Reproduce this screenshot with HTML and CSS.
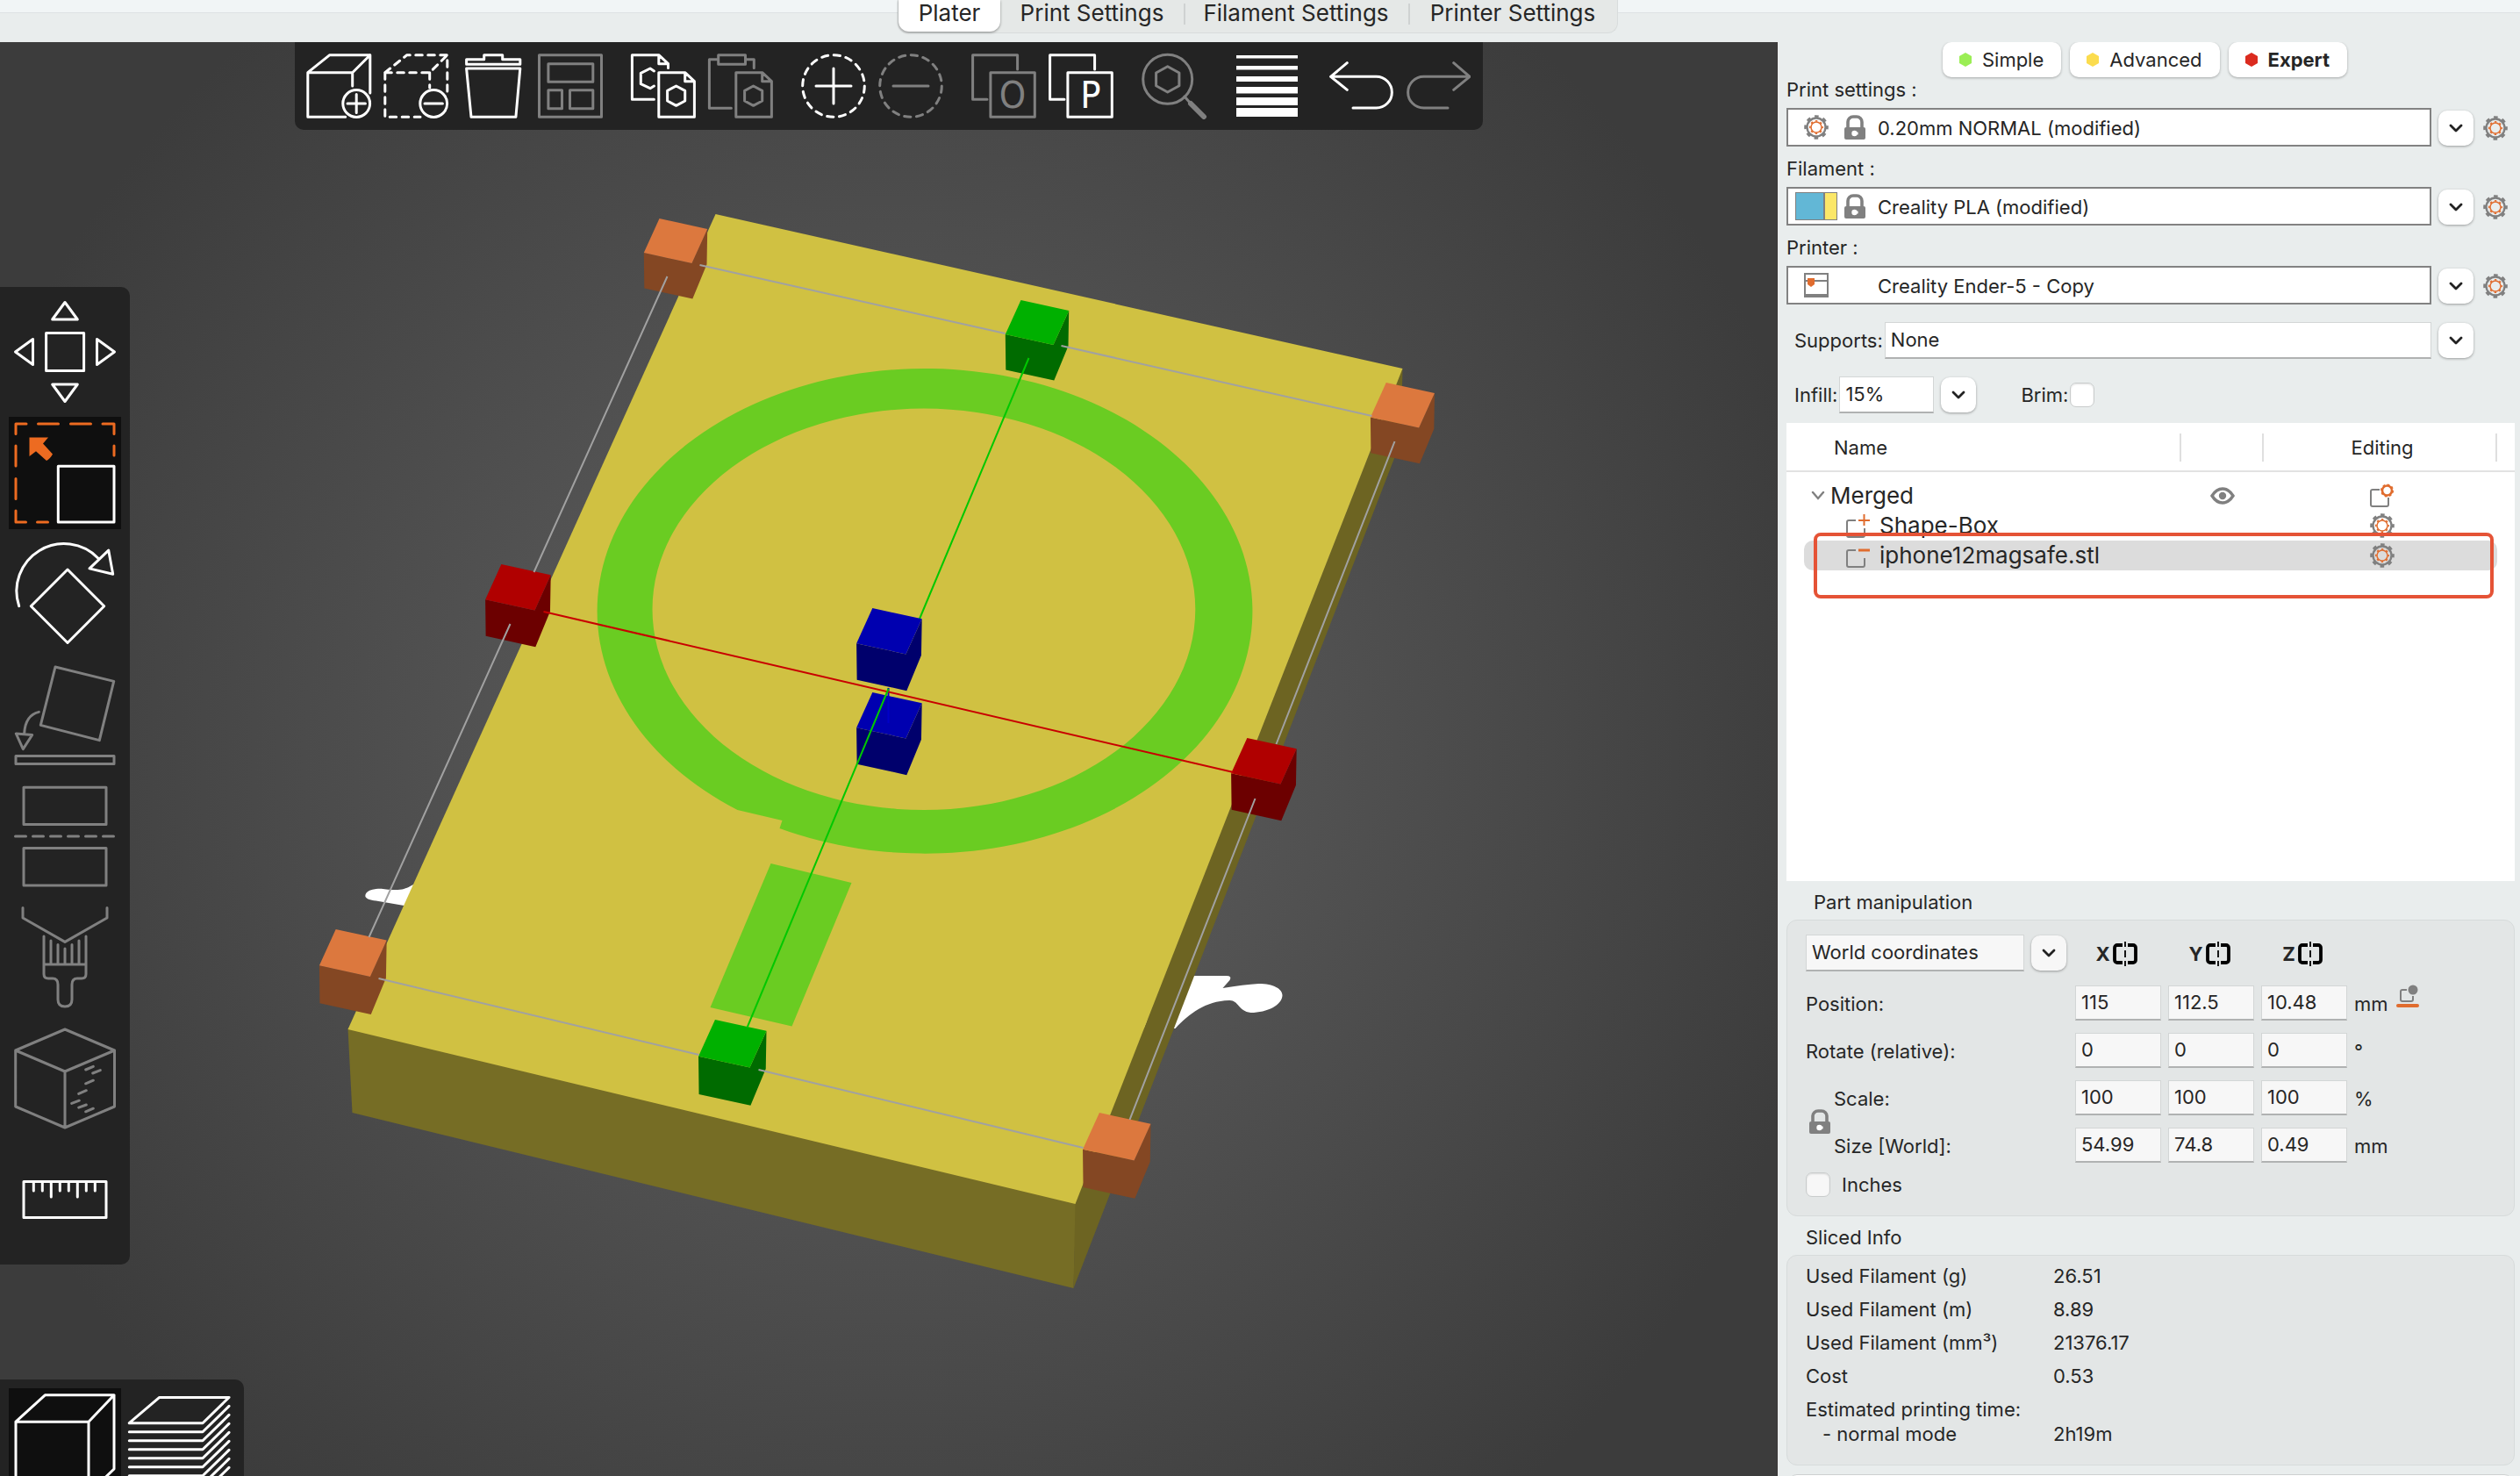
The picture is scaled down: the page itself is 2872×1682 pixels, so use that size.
FILE: index.html
```html
<!DOCTYPE html>
<html lang="en">
<head>
<meta charset="utf-8">
<title>Plater</title>
<link rel="stylesheet" href="styles.css">
</head>
<body>
<svg class="defs" width="0" height="0" aria-hidden="true">
  <symbol id="gear" viewBox="0 0 28 28">
    <g fill="none" stroke="#808080"><circle cx="14" cy="14" r="10.5" stroke-width="2.4"/><circle cx="14" cy="14" r="12.4" stroke-width="2.8" stroke-dasharray="4.6 5.14" stroke-dashoffset="2.3"/></g>
    <g fill="none" stroke="#e06c2e"><circle cx="14" cy="14" r="6" stroke-width="1.5"/><circle cx="14" cy="14" r="7.2" stroke-width="1.6" stroke-dasharray="2.4 3.25" stroke-dashoffset="1.2"/></g>
  </symbol>
  <symbol id="lock" viewBox="0 0 24 28">
    <path d="M4 15V8a6 6 0 0 1 6-6h4a6 6 0 0 1 6 6v7" fill="none" stroke="#808080" stroke-width="3.6"/>
    <rect y="14" width="24" height="14" rx="2" fill="#808080"/>
    <circle cx="11.5" cy="21" r="3.2" fill="#fff"/><path d="M12 19.6h3.6v2.8H12z" fill="#fff"/>
  </symbol>
  <symbol id="down" viewBox="0 0 16 10"><path d="M2 2l6 6 6-6" fill="none" stroke="#222" stroke-width="2.8" stroke-linecap="round" stroke-linejoin="round"/></symbol>
  <symbol id="mirror" viewBox="0 0 28 28">
    <path d="M11 4H5a3 3 0 0 0-3 3v14a3 3 0 0 0 3 3h6M17 4h6a3 3 0 0 1 3 3v14a3 3 0 0 1-3 3h-6" fill="none" stroke="#000" stroke-width="3.8"/>
    <path d="M14 0v6M14 10v8M14 22v6" stroke="#000" stroke-width="1.8"/>
  </symbol>
  <symbol id="handle" viewBox="0 0 80 100" overflow="visible">
    <path d="M.3 39L55 51L72.700 11.900L72 52.300L55.800 91.400L.8 79.400z" class="shade"/>
    <path d="M18 0l54.7 11.9L55 51 .3 39z"/>
  </symbol>
</svg>

<header class="titlebar">
  <nav class="tabs">
    <button class="tab active">Plater</button>
    <button class="tab print">Print Settings</button>
    <button class="tab filament">Filament Settings</button>
    <button class="tab printer">Printer Settings</button>
  </nav>
</header>

<main class="plater">
  <section class="canvas">
    <svg class="scene" viewBox="0 48 2026 1634" preserveAspectRatio="xMidYMid slice">
      <path fill="#fff" d="M490 1000C466 1008 468 1014 451 1014C440 1014 437 1012 429 1013C420 1014 416 1018 417 1022C419 1025 424 1026 432 1027L461 1032L490 1032Z"/>
      <path fill="#fff" d="M1350 1112H1398Q1405 1112 1402 1117L1394 1126Q1418 1122 1435 1121C1452 1121 1462 1127 1462 1134C1462 1145 1445 1154 1426 1154C1411 1152 1412 1139 1401 1140C1374 1141 1356 1155 1340 1172L1300 1172Z"/>
      <path fill="#766d25" d="M397 1172L1227 1371L1224 1468L402 1268z"/>
      <path fill="#6d6422" d="M1599 420L1597 503L1224 1468L1226 1371z"/>
      <path fill="#d0c142" d="M816 244L1599 420L1226 1372L397 1173z"/>
      <path fill="#6acc22" fill-rule="evenodd" d="M889 944A373.4 276.3 0 1 0 841 923L892 935ZM744 694.3a309.4 228.7 0 1 1 618.8 0a309.4 228.7 0 1 1-618.8 0Z"/>
      <path fill="#6acc22" d="M879 984l92 22l-68 163.500l-93-21.500z"/>
      <g class="orange"><use href="#handle" x="734" y="249" width="80" height="100"/><use href="#handle" x="1562" y="436" width="81" height="101"/></g>
      <g class="green"><use href="#handle" x="1146" y="342" width="80" height="100"/></g>
      <g class="red"><use href="#handle" x="553" y="643" width="83" height="103"/><use href="#handle" x="1403" y="841" width="83" height="103"/></g>
      <path stroke="#00c800" stroke-width="2" d="M1173 408L1036 735"/>
      <g class="blue"><use href="#handle" x="976" y="693" width="83" height="103"/><use href="#handle" x="976" y="789" width="83" height="103"/></g>
      <g class="green"><use href="#handle" x="796" y="1162" width="86" height="107"/></g>
      <g class="orange"><use href="#handle" x="364" y="1059" width="85" height="106"/><use href="#handle" x="1234" y="1268" width="86" height="107"/></g>
      <path stroke="#a1a1a1" stroke-width="2" fill="none" d="M798 302L1146 380M1210 394L1564 474M761 315L609 652M582 711L421 1068M432 1115L797 1202M865 1219L1235 1308M1288 1276L1431 910M1455 848L1590 503"/>
      <path stroke="#0000c8" stroke-width="2" d="M1013 784v40"/>
      <path stroke="#c80000" stroke-width="2" d="M620 697L1406 880"/>
      <path stroke="#00c800" stroke-width="2" d="M1013 785L852 1171"/>
    </svg>

    <div class="toolbar top">
      <button aria-label="Add"><svg viewBox="0 0 76 76"><path d="M45.700 73.300H2.800V22.700L27.800 2.700H73.800V46M2.800 22.700H53.700L73.800 2.700M53.700 22.700V38"/><circle cx="58.200" cy="58" r="15.400"/><path d="M48 58h20.400M58.200 47.500v21"/></svg></button>
      <button aria-label="Delete"><svg viewBox="0 0 76 76"><path stroke-dasharray="7.500 6.500" d="M2.800 22.700V73.300H43M2.800 22.700L27.800 2.700H73.800V44M2.800 22.700H53.700L73.800 2.700M53.700 22.700V40"/><circle cx="58.200" cy="58" r="15.400"/><path d="M48 58h20.400"/></svg></button>
      <button aria-label="Delete all"><svg viewBox="0 0 76 76"><path d="M7.600 13.300V7.700H27.700V2.700H48.700V7.700H68.800V13.300ZM7.600 18H68.800L63.900 73.300H13Z"/></svg></button>
      <button aria-label="Arrange" class="off"><svg viewBox="0 0 76 76"><path d="M2.500 2.700H73.500V73.300H2.500ZM12.900 12.700H63.800V33.300H12.900ZM12.900 42.700H28.500V63.700H12.900ZM37.500 42.700H63.800V63.700H37.500Z"/></svg></button>
      <button aria-label="Copy" class="group"><svg viewBox="0 0 76 76"><path d="M27.400 53.300H2.400V2.700H32.800L43.500 12.700V17.500M32.800 2.700V12.700H43.500M27.400 21L23 18L12.300 23.300V35.700L23 40.700L27.400 38M32.800 22.700H62.700L73.400 32.700V73.300H32.800ZM62.700 22.700V32.700H73.400M52.600 38L62.700 43.300V55L52.600 60.300L42.600 55V43.300Z"/></svg></button>
      <button aria-label="Paste" class="off"><svg viewBox="0 0 76 76"><path d="M12.700 7.700H2.400V63.300H27.400M43.500 7.700H53.300V17.500M12.700 2.700H43.500V13.300H12.700ZM32.800 22.700H62.700L73.400 32.700V73.300H32.800ZM62.700 22.700V32.700H73.400M52.600 38L62.700 43.300V55L52.600 60.300L42.600 55V43.300Z"/></svg></button>
      <button aria-label="Add instance" class="group"><svg viewBox="0 0 76 76"><circle cx="38" cy="38" r="35.300" stroke-dasharray="7.300 6.560"/><path d="M18 38h40M38 18v40"/></svg></button>
      <button aria-label="Remove instance" class="off"><svg viewBox="0 0 76 76"><circle cx="38" cy="38" r="35.300" stroke-dasharray="7.300 6.560"/><path d="M18 38h40"/></svg></button>
      <button aria-label="Split to objects" class="off group"><svg viewBox="0 0 76 76"><path d="M19 53.300H2.600V2.700H53.600V19M22.900 22.700H73.300V73.300H22.900Z"/><text x="48" y="63" text-anchor="middle">O</text></svg></button>
      <button aria-label="Split to parts"><svg viewBox="0 0 76 76"><path d="M19 53.300H2.600V2.700H53.600V19M22.900 22.700H73.300V73.300H22.900Z"/><text x="49" y="63" text-anchor="middle">P</text></svg></button>
      <button aria-label="Search" class="off group"><svg viewBox="0 0 76 76"><circle cx="30.700" cy="30.300" r="28"/><path d="M30.700 15.700L43.900 23V37.700L30.700 45L17.600 37.700V23ZM50 50l7 8"/><path d="M57 58L72 73" stroke-width="6"/></svg></button>
      <button aria-label="Variable layer height" class="group"><svg viewBox="0 0 76 76"><path class="solid" d="M3 3h70v3.500H3zM3 15h70v4.500H3zM3 27h70v6H3zM3 39h70v7.500H3zM3 51h70v9H3zM3 63h70v10H3z"/></svg></button>
      <button aria-label="Undo" class="group"><svg viewBox="0 0 76 76"><path d="M23.300 11.700L4.600 27.300L23.300 42.300M4.600 27.300H56.500A17.800 17.800 0 0 1 56.500 63H30"/></svg></button>
      <button aria-label="Redo" class="off"><svg viewBox="0 0 76 76"><path d="M56.700 11.700L75 27.300L56.700 42.300M75 27.300H22.500A17.800 17.800 0 0 0 22.500 63H50"/></svg></button>
    </div>

    <div class="toolbar left">
      <button aria-label="Move"><svg viewBox="0 0 128 128"><path d="M64 7.500L78.300 27H49.700ZM64 120.500L78.300 101H49.700ZM7.500 64L27.500 49.500V78.500ZM120.500 64L100.500 49.500V78.500ZM42.600 42.600H85.600V85.600H42.600Z"/></svg></button>
      <button aria-label="Scale" class="selected"><svg viewBox="0 0 128 128"><path stroke="#ed6b21" d="M8 19.500V8H20M33.500 8H56.500M70.500 8H93.500M107 8H120V19.500M120 33V44M8 33V56M8 70.500V93.500M8 107V120H19.500M32.500 120H44.500"/><path d="M56.300 56.300H120V120H56.300Z"/><path fill="#ed6b21" stroke="none" d="M23.500 23.500H45L39 30.500L50 42.500Q47 48 43 50L31 39.300L23.500 45Z"/></svg></button>
      <button aria-label="Rotate"><svg viewBox="0 0 128 128"><path d="M11.700 77.700A54 54 0 0 1 101.700 23M113.700 14.100L118.700 41.300L92 34.900ZM67 36L108.700 77.700L67 119.500L25.300 77.700Z"/></svg></button>
      <button aria-label="Place on face" class="off"><svg viewBox="0 0 128 128"><path d="M53 9L119.700 25.400L103.300 92.600L36.300 75.400ZM34.300 60.400Q19 64 17.700 84.400M8.300 85L26.700 86.500L16.300 102.600ZM8 110.500H120V119.500H8Z"/></svg></button>
      <button aria-label="Cut" class="off"><svg viewBox="0 0 128 128"><path d="M17 8.200H111V50.500H17ZM17 77.500H111V120H17Z"/><path stroke-dasharray="12 8" d="M7.500 64H120"/></svg></button>
      <button aria-label="Paint supports" class="off"><svg viewBox="0 0 128 128"><path d="M16 7.600V19L64 46.400L112 19V7.600M40 40V83Q40 88 45 88H50Q56 88 56 95V112Q56 120 64 120T72 112V95Q72 88 78 88H83Q88 88 88 83V40M40 72H88M48 45V72M56 49.500V72M64 54V72M72 49.500V72M80 45V72"/></svg></button>
      <button aria-label="Seam painting" class="off"><svg viewBox="0 0 128 128"><path d="M64 8L120.500 32L64 56L7.700 32ZM7.700 32V96L64 120L120.500 96V32M64 56V120M87.700 54L96.300 50.400M95.700 58L104.300 54.600M87.700 69.800L96.300 66.200M79.700 81.400L88.300 77.700M71.700 92.400L80.300 89.200M79.700 97.100L88.300 94M87.700 101.800L96.300 98.200"/></svg></button>
      <button aria-label="Measure"><svg viewBox="0 0 128 128"><path d="M17 43.500H111V84.500H17ZM28.300 43.500V54M38.300 43.500V54M48.300 43.500V61M58.300 43.500V54M68.300 43.500V54M78.300 43.500V61M88.300 43.500V54M98.300 43.500V54"/></svg></button>
    </div>

    <div class="toolbar views">
      <button aria-label="3D editor view" class="selected"><svg viewBox="0 0 128 128"><path d="M8 38.200H91L120 7.800H41.300ZM8 38.200V120H91V38.200M120 7.800V92L91 120"/></svg></button>
      <button aria-label="Preview"><svg viewBox="0 0 128 128"><path d="M7.300 39.700H91L121 10.400H41.700ZM7.300 49.700H91L121 20.400M7.300 59.700H91L121 30.400M7.300 69.700H91L121 40.400M7.300 79.700H91L121 50.400M7.300 89.700H91L121 60.400M7.300 99.700H91L121 70.400M7.300 109.700H91L121 80.400M7.300 119.700H91L121 90.400"/></svg></button>
    </div>
  </section>

  <aside class="sidebar">
    <div class="modes">
      <button class="mode"><svg viewBox="0 0 16 16"><path fill="#9bee55" d="M8 0l7 4v8l-7 4-7-4V4z"/></svg>Simple</button>
      <button class="mode"><svg viewBox="0 0 16 16"><path fill="#fbdc4e" d="M8 0l7 4v8l-7 4-7-4V4z"/></svg>Advanced</button>
      <button class="mode current"><svg viewBox="0 0 16 16"><path fill="#db2b1f" d="M8 0l7 4v8l-7 4-7-4V4z"/></svg>Expert</button>
    </div>

    <div class="preset">
      <label for="print">Print settings :</label>
      <div class="row">
        <div class="field"><svg class="kind"><use href="#gear"/></svg><svg class="lock"><use href="#lock"/></svg><select id="print"><option>0.20mm NORMAL (modified)</option></select></div>
        <button class="arrow" aria-label="Open list"><svg><use href="#down"/></svg></button>
        <button class="edit" aria-label="Edit preset"><svg><use href="#gear"/></svg></button>
      </div>
    </div>
    <div class="preset">
      <label for="filament">Filament :</label>
      <div class="row">
        <div class="field"><span class="swatch"></span><svg class="lock"><use href="#lock"/></svg><select id="filament"><option>Creality PLA (modified)</option></select></div>
        <button class="arrow" aria-label="Open list"><svg><use href="#down"/></svg></button>
        <button class="edit" aria-label="Edit preset"><svg><use href="#gear"/></svg></button>
      </div>
    </div>
    <div class="preset">
      <label for="printer">Printer :</label>
      <div class="row">
        <div class="field"><svg class="kind" viewBox="0 0 28 28"><path fill="none" stroke="#808080" stroke-width="2" d="M1 1h26v26H1zM1 9h26"/><path fill="#808080" d="M0 24h28v4H0z"/><path fill="#e06c2e" d="M4 6h8v7l-4 3-4-3z"/></svg><span class="lock"></span><select id="printer"><option>Creality Ender-5 - Copy</option></select></div>
        <button class="arrow" aria-label="Open list"><svg><use href="#down"/></svg></button>
        <button class="edit" aria-label="Edit preset"><svg><use href="#gear"/></svg></button>
      </div>
    </div>

    <div class="quick">
      <label for="supports">Supports:</label>
      <select id="supports" class="box grow"><option>None</option></select>
      <button class="arrow" aria-label="Open list"><svg><use href="#down"/></svg></button>
    </div>
    <div class="quick second">
      <label for="infill">Infill:</label>
      <select id="infill" class="box infill"><option>15%</option></select>
      <button class="arrow" aria-label="Open list"><svg><use href="#down"/></svg></button>
      <label for="brim" class="brim">Brim:</label><input type="checkbox" id="brim" class="check">
    </div>

    <div class="tree">
      <table>
        <colgroup><col><col class="c-eye"><col class="c-edit"></colgroup>
        <thead><tr><th class="name"><span>Name</span></th><th><span>&nbsp;</span></th><th class="editing"><span>Editing</span></th></tr></thead>
        <tbody>
          <tr><td><div class="item"><svg class="chev" viewBox="0 0 16 10"><path d="M2 1l6 7 6-7" fill="none" stroke="#808080" stroke-width="2.400" stroke-linecap="round"/></svg>Merged</div></td>
            <td><svg class="eye" viewBox="0 0 28 20"><path fill="none" stroke="#808080" stroke-width="3.400" d="M2 10Q7 2 14 2T26 10Q21 18 14 18T2 10Z"/><circle cx="14" cy="10" r="4.200" fill="#808080"/></svg></td>
            <td><svg class="ico" viewBox="0 0 28 28"><path fill="none" stroke="#808080" stroke-width="2" d="M11 7H3a2 2 0 0 0-2 2v15a2 2 0 0 0 2 2h16a2 2 0 0 0 2-2v-8"/><circle cx="19.500" cy="8" r="5.500" fill="none" stroke="#e06c2e" stroke-width="2.600"/><circle cx="19.500" cy="8" r="6.800" fill="none" stroke="#e06c2e" stroke-width="1.500" stroke-dasharray="2.700 2.640"/></svg></td></tr>
          <tr><td><div class="item part"><svg class="ico" viewBox="0 0 28 28"><path fill="none" stroke="#808080" stroke-width="2" d="M11 8H3a2 2 0 0 0-2 2v15a2 2 0 0 0 2 2h16a2 2 0 0 0 2-2v-8"/><path stroke="#e06c2e" stroke-width="2" d="M14 8h13M20.500 1v13"/></svg>Shape-Box</div></td><td></td><td><svg class="ico"><use href="#gear"/></svg></td></tr>
          <tr class="picked"><td><div class="item part"><svg class="ico" viewBox="0 0 28 28"><path fill="none" stroke="#808080" stroke-width="2" d="M11 8H3a2 2 0 0 0-2 2v15a2 2 0 0 0 2 2h16a2 2 0 0 0 2-2v-8"/><path stroke="#e06c2e" stroke-width="3" d="M14 8h13"/></svg>iphone12magsafe.stl</div></td><td></td><td><svg class="ico"><use href="#gear"/></svg></td></tr>
        </tbody>
      </table>
      <div class="highlight"></div>
    </div>

    <h2 class="caption inset">Part manipulation</h2>
    <section class="panel">
      <div class="manip">
        <div class="coords"><select class="box grow" aria-label="Coordinates"><option>World coordinates</option></select><button class="arrow" aria-label="Open list"><svg><use href="#down"/></svg></button></div>
        <button class="axis">X<svg><use href="#mirror"/></svg></button><button class="axis">Y<svg><use href="#mirror"/></svg></button><button class="axis">Z<svg><use href="#mirror"/></svg></button><span></span>

        <label class="wide" for="px">Position:</label>
        <input id="px" class="box" value="115"><input class="box" value="112.5" aria-label="Position Y"><input class="box" value="10.48" aria-label="Position Z">
        <span class="unit">mm<svg class="drop" viewBox="0 0 28 28"><path fill="none" stroke="#808080" stroke-width="2" d="M13 6H8a2 2 0 0 0-2 2v9a2 2 0 0 0 2 2h10a2 2 0 0 0 2-2v-4"/><circle cx="20" cy="6" r="5.500" fill="#808080"/><rect x="1" y="22" width="26" height="4" rx="2" fill="#e06c2e"/></svg></span>

        <label class="wide" for="rx">Rotate (relative):</label>
        <input id="rx" class="box" value="0"><input class="box" value="0" aria-label="Rotate Y"><input class="box" value="0" aria-label="Rotate Z"><span class="unit">°</span>

        <svg class="ratio"><use href="#lock"/></svg>
        <label for="sx">Scale:</label>
        <input id="sx" class="box" value="100"><input class="box" value="100" aria-label="Scale Y"><input class="box" value="100" aria-label="Scale Z"><span class="unit">%</span>
        <label for="zx">Size [World]:</label>
        <input id="zx" class="box" value="54.99"><input class="box" value="74.8" aria-label="Size Y"><input class="box" value="0.49" aria-label="Size Z"><span class="unit">mm</span>
      </div>
      <div class="inches"><input type="checkbox" id="inches" class="check"><label for="inches">Inches</label></div>
    </section>

    <h2 class="caption">Sliced Info</h2>
    <section class="panel info">
      <table>
        <tr><th>Used Filament (g)</th><td>26.51</td></tr>
        <tr><th>Used Filament (m)</th><td>8.89</td></tr>
        <tr><th>Used Filament (mm³)</th><td>21376.17</td></tr>
        <tr><th>Cost</th><td>0.53</td></tr>
        <tr class="est"><th>Estimated printing time:</th><td></td></tr>
        <tr class="sub"><th>- normal mode</th><td>2h19m</td></tr>
      </table>
    </section>
    <button class="action" aria-label="Slice"></button>
  </aside>
</main>
</body>
</html>
```
FILE: styles.css
```css
* { box-sizing: border-box; }
body {
  margin: 0;
  height: 100vh;
  display: flex;
  flex-direction: column;
  overflow: hidden;
  background: #e9eded;
  color: #262626;
  font: 22px/28px Inter, "Liberation Sans", sans-serif;
}
button, input, select { font: inherit; color: inherit; margin: 0; }
button { padding: 0; border: 0; background: none; }
svg { display: block; flex: none; }
.defs { position: absolute; }

/* title bar and tabs */
.titlebar {
  flex: none;
  height: 48px;
  padding-right: 5px;
  display: flex;
  justify-content: center;
  align-items: flex-start;
  background: linear-gradient(#f1f5f6 14px, #dde2e3 14px, #dde2e3 15px, #e9eded 15px);
}
.tabs {
  display: flex;
  height: 38px;
  background: #e5e8e7;
  border: 1px solid #d8dcdc;
  border-top: 0;
  border-radius: 0 0 12px 12px;
}
.tab { height: 33px; font-size: 26px; line-height: 30px; padding: 0 0 3px; }
.tab.active { width: 116px; height: 36px; padding-bottom: 6px; background: #fff; border-radius: 0 0 12px 12px; box-shadow: 0 1px 3px rgba(0, 0, 0, .4); }
.tab.print { width: 209px; }
.tab.filament { width: 256px; }
.tab.printer { width: 238px; }
.tab.filament, .tab.printer {
  background: linear-gradient(#cfd2d2, #cfd2d2) 0 4px / 2px 24px no-repeat;
}

.plater { flex: 1; min-height: 0; display: grid; grid-template-columns: minmax(0, 1fr) 846px; }

/* 3D canvas */
.canvas {
  position: relative;
  overflow: hidden;
  background: radial-gradient(circle at 50% 50%, #626262, #3c3c3c 1100px);
  border-right: 1px solid #3c3737;
}
.scene { position: absolute; inset: 0; width: 100%; height: 100%; }
.orange { fill: #dc783e; --shade: #844723; }
.green { fill: #00b000; --shade: #006b00; }
.red { fill: #b00000; --shade: #6c0000; }
.blue { fill: #0000b0; --shade: #00006c; }
.shade { fill: var(--shade); }

.toolbar { position: absolute; display: flex; background: #232323; }
.toolbar svg { width: 100%; height: 100%; fill: none; stroke: #fff; stroke-width: 3; stroke-linecap: round; stroke-linejoin: round; }
.toolbar .off svg { stroke: #808080; }
.toolbar .solid { fill: #fff; stroke: none; }
.toolbar text { font: 43px "Liberation Sans Narrow", "DejaVu Sans Condensed", sans-serif; fill: #fff; stroke: none; }
.toolbar .off text { fill: #808080; }
.toolbar.top { top: 0; left: 336px; height: 100px; padding: 12px 14px 12px 12px; gap: 12px; border-radius: 0 0 10px 10px; }
.top button { width: 76px; height: 76px; }
.top .group { margin-left: 18px; }
.toolbar.left { top: 279px; left: 0; flex-direction: column; gap: 10px; padding: 10px; border-radius: 0 10px 10px 0; }
.left button, .views button { width: 128px; height: 128px; }
.toolbar.views { top: 1524px; left: 0; gap: 2px; padding: 10px; border-radius: 0 10px 0 0; }
.toolbar .selected { background: #0f0f0f; }

/* sidebar */
.sidebar { padding: 0 6px 0 10px; overflow: hidden; }
.modes { display: flex; justify-content: center; gap: 10px; padding-right: 13px; }
.mode {
  display: flex; align-items: center; gap: 11px;
  height: 40px; padding: 0 20px 0 18px;
  background: #fff; border-radius: 10px;
  box-shadow: 0 1px 3px rgba(0, 0, 0, .3);
}
.mode svg { width: 16px; height: 16px; }
.mode.current { font-weight: 700; }

.preset { margin-bottom: 11px; }
.preset label { display: block; margin-bottom: 7px; }
.row { display: flex; align-items: center; }
.field {
  flex: 1; height: 44px;
  display: flex; align-items: center;
  padding-left: 8px;
  background: #fff; border: 2px solid #828282;
}
.field select { flex: 1; height: 40px; padding-top: 1px; }
.kind { width: 28px; height: 28px; margin: 0 18px 0 10px; }
.swatch { width: 48px; height: 32px; margin-right: 8px; border: 1px solid #808080; background: linear-gradient(90deg, #62b7d6 31px, #808080 31px, #808080 33px, #fbe768 33px); }
.lock { width: 24px; height: 28px; margin-right: 14px; }
select { appearance: none; border: 0; background: none; padding: 0; }
.arrow {
  flex: none; width: 40px; height: 40px; margin-left: 8px;
  display: flex; align-items: center; justify-content: center;
  background: #fff; border-radius: 10px;
  box-shadow: 0 1px 3px rgba(0, 0, 0, .35);
}
.arrow svg { width: 16px; height: 10px; }
.row .arrow { margin-top: 2px; }
.edit { width: 28px; height: 28px; margin: 2px 8px 0 11px; }
.edit svg { width: 28px; height: 28px; }

.box {
  width: 98px; height: 40px; min-width: 0;
  padding: 0 0 2px 6px;
  background: #fff;
  border: 1px solid #d3d6d6; border-bottom: 2px solid #b0b2b2;
  border-radius: 0;
}
.box.grow { flex: 1; width: auto; height: 42px; }
.quick { display: flex; align-items: center; height: 42px; margin-top: 20px; padding: 0 47px 0 9px; }
.quick .box { height: 42px; }
.quick label { padding-right: 2px; }
.quick .infill { width: 108px; }
.quick .brim { margin-left: 51px; }
.check {
  appearance: none; flex: none;
  width: 28px; height: 28px;
  background: #fff; border: 1px solid #c9cccc; border-radius: 7px;
  box-shadow: inset 0 1px 2px rgba(0, 0, 0, .12);
}

/* object list */
.tree {
  position: relative;
  height: 522px; margin-top: 11px; padding: 0 20px 0 20px;
  background: linear-gradient(#e2e2e2, #e2e2e2) 0 54px / 100% 2px no-repeat #fff;
}
.tree table { width: 100%; table-layout: fixed; border-collapse: separate; border-spacing: 0; }
.c-eye { width: 94px; }
.c-edit { width: 266px; }
.tree th { height: 66px; padding: 12px 0 22px; font-weight: 400; vertical-align: top; }
.tree th span { display: block; height: 32px; line-height: 32px; border-right: 2px solid #dfdfdf; }
.tree .name span { text-align: left; padding-left: 34px; }
.tree .editing span { padding-left: 6px; }
.tree td { height: 34px; padding: 0; font-size: 26px; line-height: 34px; }
.tree td:last-child { padding-left: 4px; }
.item { display: flex; align-items: center; }
.chev { width: 16px; height: 10px; margin: 0 6px 0 8px; }
.part { padding-left: 48px; gap: 10px; }
.ico { width: 28px; height: 28px; }
.eye { width: 28px; height: 20px; }
td > .ico, td > .eye { margin: 0 auto; }
.tree .picked td { background: #dcdcdc; }
.picked td:first-child { border-radius: 10px 0 0 10px; }
.picked td:last-child { border-radius: 0 10px 10px 0; }
.highlight { position: absolute; left: 31px; right: 24px; top: 125px; height: 75px; border: 4px solid #e55336; border-radius: 8px; }

/* panels */
.caption { margin: 0; padding: 4px 0 0 22px; font-size: inherit; font-weight: 400; line-height: 40px; }
.caption.inset { padding-left: 31px; }
.panel { background: #e3e6e6; border: 1px solid #d7dbdb; border-radius: 12px; padding: 16px 21px 21px; }
.manip { display: grid; grid-template-columns: 24px 267px 98px 98px 98px auto; gap: 14px 8px; align-items: center; }
.manip label, .unit { padding-top: 2px; }
.panel .box, .panel .arrow, .panel .check { background: #f7f7f7; }
.coords { grid-column: span 2; display: flex; align-items: center; width: 297px; margin-bottom: 2px; }
.wide { grid-column: span 2; }
.axis { display: flex; align-items: center; justify-content: center; gap: 3px; padding-right: 4px; font-weight: 700; }
.axis svg { width: 28px; height: 28px; }
.unit { display: flex; align-items: center; }
.drop { width: 28px; height: 28px; margin: -16px 0 0 8px; }
.ratio { grid-row: span 2; width: 24px; height: 28px; margin-left: 4px; }
.inches { display: flex; align-items: center; gap: 13px; margin-top: 11px; }
.panel.info { padding: 4px 21px 16px; }
.info table { border-spacing: 0; }
.info th { width: 282px; padding: 5px 0; text-align: left; font-weight: 400; }
.info td { padding: 5px 0; }
.info .est > * { padding-bottom: 0; }
.info .sub > * { padding-top: 0; }
.info .sub th { padding-left: 19px; }
.action { display: block; width: calc(100% - 4px); height: 44px; margin: 10px 2px 0; background: #fff; border: 1px solid #cdd0d0; border-radius: 10px; }
```
